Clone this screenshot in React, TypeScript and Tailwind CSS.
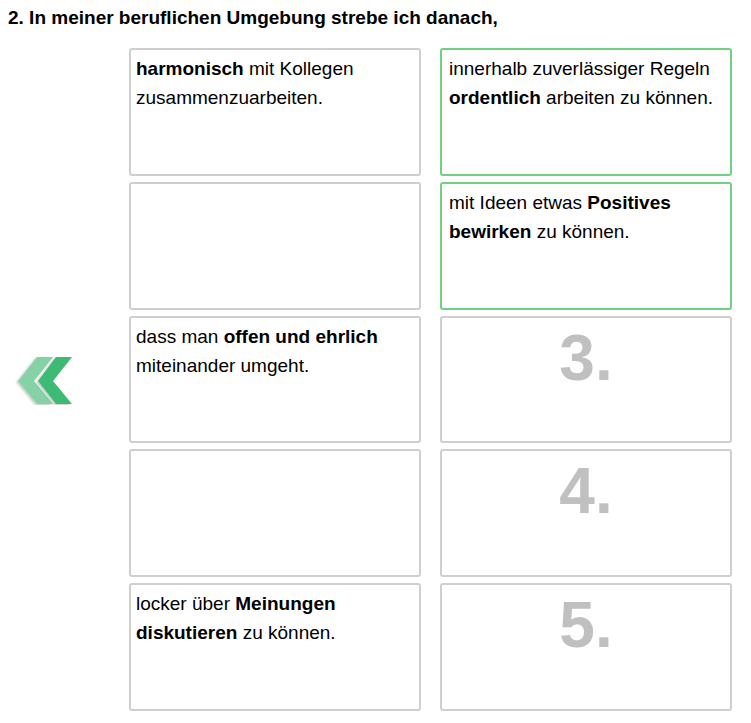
const answers = [
  {
    left: (
      <>
        <b>harmonisch</b> mit Kollegen zusammenzuarbeiten.
      </>
    ),
    right: (
      <>
        innerhalb zuverlässiger Regeln <b>ordentlich</b> arbeiten zu können.
      </>
    ),
  },
  {
    left: null,
    right: (
      <>
        mit Ideen etwas <b>Positives bewirken</b> zu können.
      </>
    ),
  },
  {
    left: (
      <>
        dass man <b>offen und ehrlich</b> miteinander umgeht.
      </>
    ),
    right: "3.",
  },
  { left: null, right: "4." },
  {
    left: (
      <>
        locker über <b>Meinungen diskutieren</b> zu können.
      </>
    ),
    right: "5.",
  },
];

const Chevrons = () => (
  <svg width="80" height="52" viewBox="0 354 80 52">
    <defs>
      <filter id="sh" x="-30%" y="-30%" width="160%" height="160%">
        <feDropShadow dx="-1.5" dy="1" stdDeviation="1.2" floodColor="#000" floodOpacity="0.25" />
      </filter>
    </defs>
    <polygon points="18,382 37,358 53,358 34,382 53,405 37,405" fill="#86d1a6" filter="url(#sh)" />
    <polygon points="38,382 56,358 72,358 53,382 72,405 56,405" fill="#3dbb74" filter="url(#sh)" />
  </svg>
);

export default function App() {
  return (
    <div className="bg-white w-[751px] h-[723px] font-['Liberation_Sans',Arial,sans-serif] text-black">
      <h2 className="pl-2 pt-[8px] text-[19px] leading-[20px] font-bold">
        2. In meiner beruflichen Umgebung strebe ich danach,
      </h2>
      <div className="flex mt-[20px]">
        <div className="w-[129px] flex items-center">
          <Chevrons />
        </div>
        <div className="grid grid-cols-[292px_292px] gap-x-[19px] gap-y-[6px]">
          {answers.map((row, i) => (
            <div key={i} className="contents">
              <div className="h-[127.75px] border-2 border-[#cfcfcf] rounded-[3px] px-[5px] pt-[4px] text-[19px] leading-[29px]">
                {row.left}
              </div>
              {typeof row.right === "string" ? (
                <div className="h-[127.75px] border-2 border-[#cfcfcf] rounded-[3px] pt-[3px] text-center text-[64px] leading-[74px] font-bold text-[#c0c0c0]">
                  {row.right}
                </div>
              ) : (
                <div className="h-[127.75px] border-2 border-[#6fd281] rounded-[3px] px-[7px] pt-[4px] text-[19px] leading-[29px]">
                  {row.right}
                </div>
              )}
            </div>
          ))}
        </div>
      </div>
    </div>
  );
}
